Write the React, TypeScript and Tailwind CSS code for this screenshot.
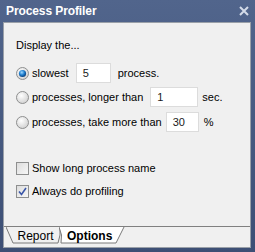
import React from "react";

const Radio: React.FC<{ checked?: boolean }> = ({ checked }) => (
  <svg width="13" height="13" viewBox="0 0 13 13" className="shrink-0">
    <defs>
      <radialGradient id="rOff" cx="40%" cy="35%" r="70%">
        <stop offset="0%" stopColor="#ffffff" />
        <stop offset="100%" stopColor="#cfcfcf" />
      </radialGradient>
      <radialGradient id="rOn" cx="40%" cy="35%" r="65%">
        <stop offset="0%" stopColor="#9fd8ff" />
        <stop offset="55%" stopColor="#1e7fd0" />
        <stop offset="100%" stopColor="#0b3f7a" />
      </radialGradient>
    </defs>
    <circle cx="6.5" cy="6.5" r="6" fill="url(#rOff)" stroke="#8e8f8f" strokeWidth="1" />
    {checked && <circle cx="6.5" cy="6.5" r="3.6" fill="url(#rOn)" />}
  </svg>
);

const Check: React.FC<{ checked?: boolean }> = ({ checked }) => (
  <svg width="13" height="13" viewBox="0 0 13 13" className="shrink-0">
    <defs>
      <linearGradient id="cb" x1="0" y1="0" x2="1" y2="1">
        <stop offset="0%" stopColor="#dcdcdc" />
        <stop offset="100%" stopColor="#f8f8f8" />
      </linearGradient>
    </defs>
    <rect x="0.5" y="0.5" width="12" height="12" fill="url(#cb)" stroke="#8e8f8f" />
    {checked && (
      <path d="M3 6.5 L5.5 9.5 L10 3" fill="none" stroke="#3a56a8" strokeWidth="1.6" />
    )}
  </svg>
);

const Box: React.FC<{ value: string; w: string }> = ({ value, w }) => (
  <div className={`${w} h-[20px] bg-white border border-[#dcdcdc] flex items-center pl-[6px] text-[#1a1a1a]`}>
    {value}
  </div>
);

export default function App() {
  return (
    <div
      className="w-[255px] h-[252px] bg-gradient-to-b from-[#51658c] to-[#3d4f75] flex flex-col text-[11px] text-black"
      style={{ fontFamily: '"Liberation Sans", Arial, sans-serif' }}
    >
      <div className="h-[22px] flex items-center justify-between pl-[6px] pr-[6px]">
        <span className="text-white font-bold text-[12px] tracking-[-0.1px]">Process Profiler</span>
        <svg width="10" height="10" viewBox="0 0 10 10">
          <path d="M1 1 L9 9 M9 1 L1 9" stroke="#d4dbe8" strokeWidth="2" />
        </svg>
      </div>
      <div className="ml-[3px] mr-[4px] h-[226px] bg-[#f0f0f0] border border-[#9aa0a8] flex flex-col">
        <div className="flex-1 pl-[12px] flex flex-col">
          <div className="mt-[15px] h-[14px] flex items-center">Display the...</div>
          <div className="mt-[11px] h-[20px] flex items-center">
            <Radio checked />
            <span className="ml-[3px]">slowest</span>
            <div className="ml-[7px]"><Box value="5" w="w-[35px]" /></div>
            <span className="ml-[7px]">process.</span>
          </div>
          <div className="mt-[4px] h-[20px] flex items-center">
            <Radio />
            <span className="ml-[3px]">processes, longer than</span>
            <div className="ml-[7px]"><Box value="1" w="w-[48px]" /></div>
            <span className="ml-[4px]">sec.</span>
          </div>
          <div className="mt-[5px] h-[20px] flex items-center">
            <Radio />
            <span className="ml-[3px]">processes, take more than</span>
            <div className="ml-[4px]"><Box value="30" w="w-[33px]" /></div>
            <span className="ml-[5px]">%</span>
          </div>
          <div className="mt-[28px] h-[16px] flex items-center">
            <Check />
            <span className="ml-[3px]">Show long process name</span>
          </div>
          <div className="mt-[7px] h-[16px] flex items-center">
            <Check checked />
            <span className="ml-[3px]">Always do profiling</span>
          </div>
        </div>
        <div className="h-[19px] border-t border-[#808080] flex pl-[2px] mb-[2px]">
          <div className="relative w-[55px] h-[17px] flex items-center justify-center pl-[4px] text-[12px]">
            <svg className="absolute inset-0" width="55" height="17" viewBox="0 0 55 17">
              <path d="M0 0 L7 16 L52 16 Q55 8 54 0" fill="#f0f0f0" stroke="#7a7a7a" />
            </svg>
            <span className="relative">Report</span>
          </div>
          <div className="relative -ml-[2px] w-[66px] h-[17px] flex items-center pl-[8px] font-bold text-[12px]">
            <svg className="absolute inset-0" width="66" height="17" viewBox="0 0 66 17">
              <path d="M0 0 Q4 8 2 16 L57 16 L65 0" fill="#ffffff" stroke="#7a7a7a" />
            </svg>
            <span className="relative">Options</span>
          </div>
        </div>
      </div>
    </div>
  );
}
